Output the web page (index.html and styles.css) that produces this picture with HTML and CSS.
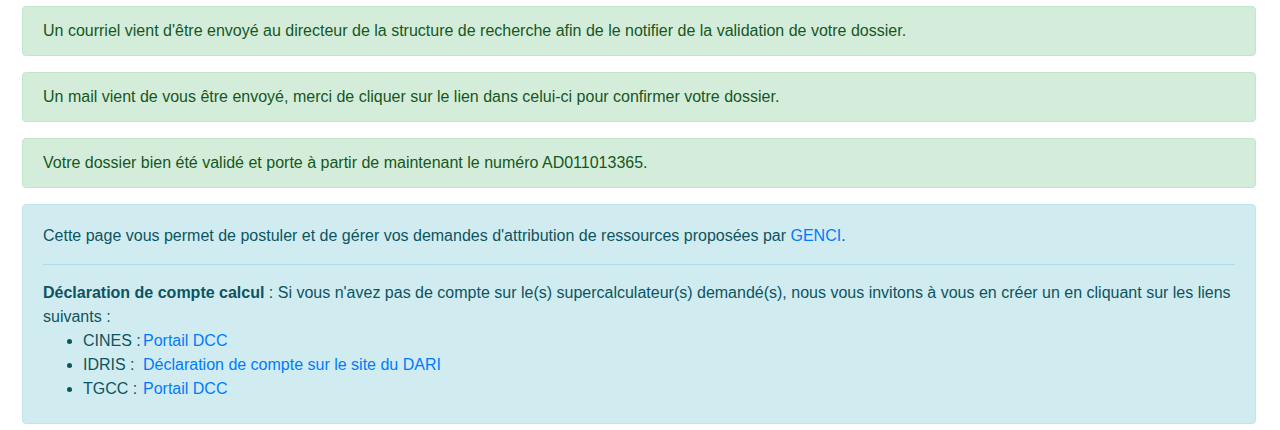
FILE: index.html
```html
<!DOCTYPE html>
<html lang="fr">
<head>
    <meta charset="UTF-8">
    <meta name="viewport" content="width=device-width, initial-scale=1.0">
    <title>Dossier</title>
    <link rel="stylesheet" href="styles.css">
</head>
<body>
    <div class="container">
        <div class="alert alert-success">Un courriel vient d'être envoyé au directeur de la structure de recherche afin de le notifier de la validation de votre dossier.</div>
        <div class="alert alert-success">Un mail vient de vous être envoyé, merci de cliquer sur le lien dans celui-ci pour confirmer votre dossier.</div>
        <div class="alert alert-success">Votre dossier bien été validé et porte à partir de maintenant le numéro AD011013365.</div>

        <div class="alert alert-info info-box">
            <p>Cette page vous permet de postuler et de gérer vos demandes d'attribution de ressources proposées par <a href="#">GENCI</a>.</p>
            <hr>
            <p><strong>Déclaration de compte calcul</strong> : Si vous n'avez pas de compte sur le(s) supercalculateur(s) demandé(s), nous vous invitons à vous en créer un en cliquant sur les liens suivants :</p>
            <ul>
                <li><span class="centre">CINES :</span><a href="#">Portail DCC</a></li>
                <li><span class="centre">IDRIS :</span><a href="#">Déclaration de compte sur le site du DARI</a></li>
                <li><span class="centre">TGCC :</span><a href="#">Portail DCC</a></li>
            </ul>
        </div>
    </div>
</body>
</html>
```

FILE: styles.css
```css
body {
    margin: 0;
    background: #fff;
    font-family: "Liberation Sans", Arial, sans-serif;
    font-size: 16px;
    line-height: 24px;
}
.container {
    padding: 6px 24px 0 22px;
}
.alert {
    padding: 12px 20px;
    margin-bottom: 16px;
    border: 1px solid transparent;
    border-radius: 4px;
}
.alert-success {
    color: #155724;
    background-color: #d4edda;
    border-color: #c3e6cb;
}
.alert-info {
    color: #0c5460;
    background-color: #d1ecf1;
    border-color: #bee5eb;
}
.info-box {
    padding-top: 19px;
    padding-bottom: 22px;
}
p {
    margin: 0;
}
hr {
    margin: 16px 0;
    border: 0;
    border-top: 1px solid #abdde5;
}
ul {
    margin: 0;
    padding-left: 40px;
}
.centre {
    display: inline-block;
    width: 60px;
}
a {
    color: #007bff;
    text-decoration: none;
}
strong {
    font-weight: bold;
}
```
